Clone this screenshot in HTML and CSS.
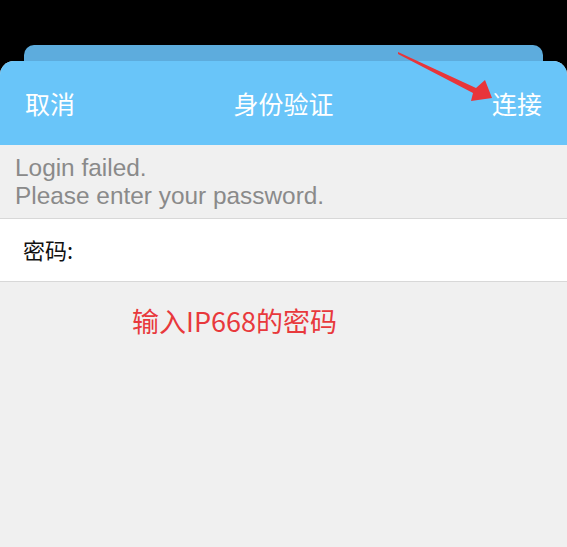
FILE: index.html
```html
<!DOCTYPE html>
<html lang="zh-CN">
<head>
    <meta charset="UTF-8">
    <meta name="viewport" content="width=device-width, initial-scale=1.0">
    <title>身份验证</title>
    <link rel="stylesheet" href="styles.css">
</head>
<body>
    <div class="screen">
        <div class="back-card"></div>

        <div class="sheet">
            <div class="nav-bar">
                <span class="nav-btn nav-left">取消</span>
                <span class="nav-title">身份验证</span>
                <span class="nav-btn nav-right">连接</span>
            </div>

            <div class="message">
                <div>Login failed.</div>
                <div>Please enter your password.</div>
            </div>

            <div class="field-row">
                <span class="field-label">密码:</span>
            </div>

            <div class="hint">输入IP668的密码</div>
        </div>

        <!-- 标注箭头 -->
        <svg class="annotation" width="567" height="547" viewBox="0 0 567 547">
            <polygon points="398,52 476,88 485,80 492,98 471,101 473,93 398,54" fill="#e8353a"/>
        </svg>
    </div>
</body>
</html>
```

FILE: styles.css
```css
:root {
    --nav-color: #69c5f9;
    --back-color: #5dacdd;
    --page-bg: #f0f0f0;
    --line-color: #d8d8d8;
    --hint-color: #e8393c;
}

html, body {
    margin: 0;
    padding: 0;
}

body {
    background: #000;
    font-family: 'Noto Sans CJK SC', 'Liberation Sans', sans-serif;
}

.screen {
    position: relative;
    width: 567px;
    height: 547px;
    overflow: hidden;
    padding-top: 45px;
    box-sizing: border-box;
    display: flex;
    flex-direction: column;
}

.back-card {
    height: 16px;
    margin: 0 24px;
    background: var(--back-color);
    border-radius: 10px 10px 0 0;
}

.sheet {
    flex: 1;
    background: var(--page-bg);
    border-radius: 14px 14px 0 0;
    overflow: hidden;
}

.nav-bar {
    height: 84px;
    background: var(--nav-color);
    display: grid;
    grid-template-columns: 1fr auto 1fr;
    align-items: center;
    padding: 0 25px;
    color: #fff;
    font-size: 25px;
}

.nav-right {
    justify-self: end;
}

.message {
    padding: 9px 15px 8px;
    font-family: 'Liberation Sans', 'Noto Sans CJK SC', sans-serif;
    font-size: 24.4px;
    line-height: 28px;
    color: #8a8a8a;
    border-bottom: 1px solid var(--line-color);
}

.field-row {
    height: 62px;
    background: #fff;
    display: flex;
    align-items: center;
    padding-left: 23px;
    border-bottom: 1px solid var(--line-color);
}

.field-label {
    font-size: 22px;
    color: #111;
    margin-top: -2px;
}

.hint {
    margin-top: 21px;
    padding-left: 132px;
    font-size: 27px;
    line-height: 36px;
    color: var(--hint-color);
}

.annotation {
    position: absolute;
    top: 0;
    left: 0;
    pointer-events: none;
}
```
